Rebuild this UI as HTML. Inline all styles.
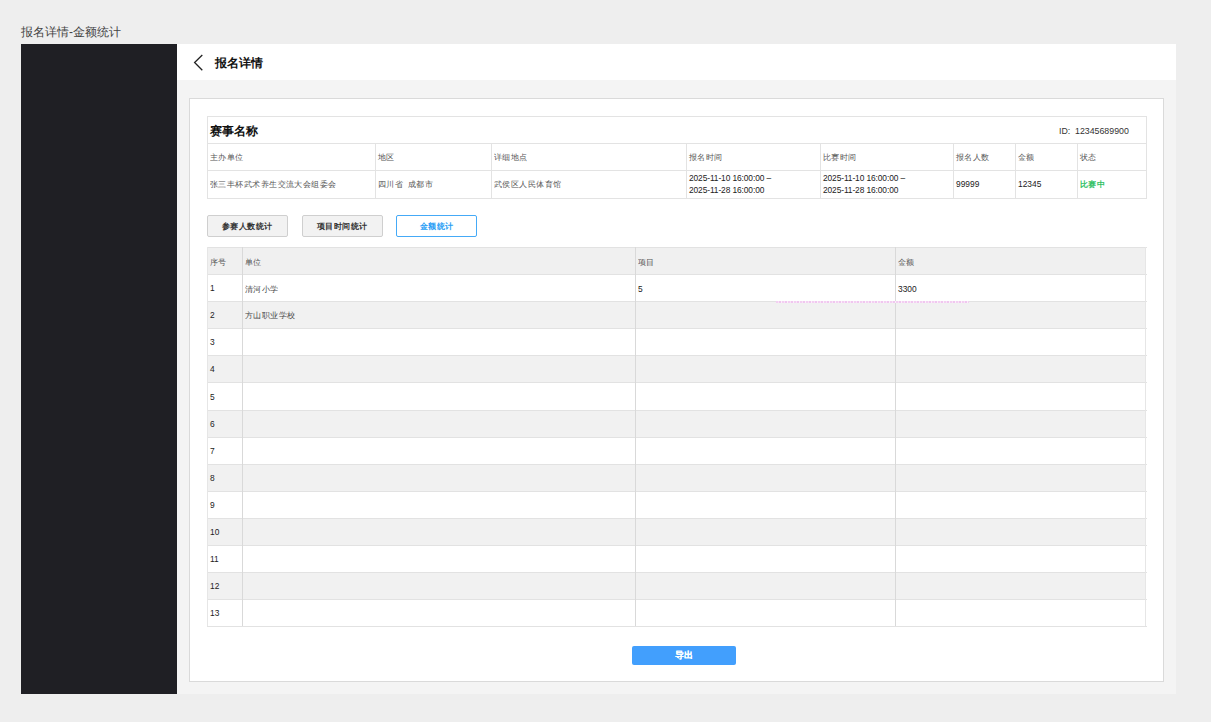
<!DOCTYPE html><html><head><meta charset="utf-8"><style>
*{margin:0;padding:0;box-sizing:border-box}
html,body{width:1211px;height:722px;overflow:hidden;background:#eeeeee;font-family:"Liberation Sans", sans-serif}
.a{position:absolute}
.t{position:absolute;white-space:nowrap;line-height:1}
.s{font-size:8px;color:#555;transform:scale(1.055);transform-origin:0 0}
.d{font-size:8.4px;color:#222}
.hl{position:absolute;height:1px}
.vl{position:absolute;width:1px}
</style></head><body>
<div class="t" style="left:21px;top:26px;font-size:12px;color:#444">报名详情-金额统计</div>
<div class="a" style="left:21px;top:44px;width:156px;height:650px;background:#1f1f24"></div>
<div class="a" style="left:177px;top:44px;width:999px;height:36px;background:#fff"></div>
<div class="a" style="left:177px;top:80px;width:999px;height:614px;background:#f4f4f4"></div>
<svg class="a" style="left:190px;top:52px" width="16" height="22" viewBox="0 0 16 22"><path d="M12.3 3 L4.6 10.5 L12.3 18.3" fill="none" stroke="#222" stroke-width="1.3"/></svg>
<div class="t" style="left:215px;top:56.5px;font-size:12px;font-weight:bold;color:#111">报名详情</div>
<div class="a" style="left:189px;top:98px;width:975px;height:584px;background:#fff;border:1px solid #dadada"></div>
<div class="a" style="left:207px;top:116px;width:940px;height:83px;border:1px solid #e3e3e3"></div>
<div class="hl" style="left:207px;top:143px;width:939px;background:#e3e3e3"></div>
<div class="hl" style="left:207px;top:170px;width:939px;background:#e3e3e3"></div>
<div class="vl" style="left:375px;top:143px;height:55px;background:#e3e3e3"></div>
<div class="vl" style="left:491px;top:143px;height:55px;background:#e3e3e3"></div>
<div class="vl" style="left:686px;top:143px;height:55px;background:#e3e3e3"></div>
<div class="vl" style="left:820px;top:143px;height:55px;background:#e3e3e3"></div>
<div class="vl" style="left:953px;top:143px;height:55px;background:#e3e3e3"></div>
<div class="vl" style="left:1015px;top:143px;height:55px;background:#e3e3e3"></div>
<div class="vl" style="left:1077px;top:143px;height:55px;background:#e3e3e3"></div>
<div class="t" style="left:210px;top:125px;font-size:12px;font-weight:bold;color:#111">赛事名称</div>
<div class="t" style="left:1059px;top:127px;font-size:8.8px;color:#333">ID:</div>
<div class="t" style="left:1075px;top:127px;font-size:8.8px;color:#333">12345689900</div>
<div class="t s" style="left:210px;top:154px;">主办单位</div>
<div class="t s" style="left:378px;top:154px;">地区</div>
<div class="t s" style="left:494px;top:154px;">详细地点</div>
<div class="t s" style="left:689px;top:154px;">报名时间</div>
<div class="t s" style="left:823px;top:154px;">比赛时间</div>
<div class="t s" style="left:956px;top:154px;">报名人数</div>
<div class="t s" style="left:1018px;top:154px;">金额</div>
<div class="t s" style="left:1080px;top:154px;">状态</div>
<div class="t s" style="left:210px;top:181px;">张三丰杯武术养生交流大会组委会</div>
<div class="t s" style="left:378px;top:181px;">四川省&nbsp;&nbsp;成都市</div>
<div class="t s" style="left:494px;top:181px;">武侯区人民体育馆</div>
<div class="t d" style="left:689px;top:172px;line-height:12px;letter-spacing:-0.1px">2025-11-10 16:00:00 –<br>2025-11-28 16:00:00</div>
<div class="t d" style="left:823px;top:172px;line-height:12px;letter-spacing:-0.1px">2025-11-10 16:00:00 –<br>2025-11-28 16:00:00</div>
<div class="t d" style="left:956px;top:180px">99999</div>
<div class="t d" style="left:1018px;top:180px">12345</div>
<div class="t s" style="left:1080px;top:181px;font-weight:bold;color:#2fbf63">比赛中</div>
<div class="a" style="left:207px;top:215px;width:81px;height:22px;border-radius:2px;background:#f2f2f2;border:1px solid #cfcfcf;color:#333"></div>
<div class="t s" style="left:222.18px;top:222.5px;font-weight:bold;color:#333">参赛人数统计</div>
<div class="a" style="left:302px;top:215px;width:81px;height:22px;border-radius:2px;background:#f2f2f2;border:1px solid #cfcfcf;color:#333"></div>
<div class="t s" style="left:317.18px;top:222.5px;font-weight:bold;color:#333">项目时间统计</div>
<div class="a" style="left:396px;top:215px;width:81px;height:22px;border-radius:2px;background:#fff;border:1px solid #45aaf7;color:#2a9ef5"></div>
<div class="t s" style="left:419.62px;top:222.5px;font-weight:bold;color:#2a9ef5">金额统计</div>
<div class="a" style="left:207px;top:247px;width:939px;height:27px;background:#f0f0f0"></div>
<div class="a" style="left:207px;top:301px;width:939px;height:27px;background:#f1f1f1"></div>
<div class="a" style="left:207px;top:355px;width:939px;height:27px;background:#f1f1f1"></div>
<div class="a" style="left:207px;top:410px;width:939px;height:27px;background:#f1f1f1"></div>
<div class="a" style="left:207px;top:464px;width:939px;height:27px;background:#f1f1f1"></div>
<div class="a" style="left:207px;top:518px;width:939px;height:27px;background:#f1f1f1"></div>
<div class="a" style="left:207px;top:572px;width:939px;height:27px;background:#f1f1f1"></div>
<div class="hl" style="left:207px;top:247px;width:940px;background:#e2e2e2"></div>
<div class="hl" style="left:207px;top:274px;width:940px;background:#e2e2e2"></div>
<div class="hl" style="left:207px;top:301px;width:940px;background:#e2e2e2"></div>
<div class="hl" style="left:207px;top:328px;width:940px;background:#e2e2e2"></div>
<div class="hl" style="left:207px;top:355px;width:940px;background:#e2e2e2"></div>
<div class="hl" style="left:207px;top:382px;width:940px;background:#e2e2e2"></div>
<div class="hl" style="left:207px;top:410px;width:940px;background:#e2e2e2"></div>
<div class="hl" style="left:207px;top:437px;width:940px;background:#e2e2e2"></div>
<div class="hl" style="left:207px;top:464px;width:940px;background:#e2e2e2"></div>
<div class="hl" style="left:207px;top:491px;width:940px;background:#e2e2e2"></div>
<div class="hl" style="left:207px;top:518px;width:940px;background:#e2e2e2"></div>
<div class="hl" style="left:207px;top:545px;width:940px;background:#e2e2e2"></div>
<div class="hl" style="left:207px;top:572px;width:940px;background:#e2e2e2"></div>
<div class="hl" style="left:207px;top:599px;width:940px;background:#e2e2e2"></div>
<div class="hl" style="left:207px;top:626px;width:940px;background:#e2e2e2"></div>
<div class="vl" style="left:207px;top:247px;height:379px;background:#e6e6e6"></div>
<div class="vl" style="left:242px;top:247px;height:379px;background:#d9d9d9"></div>
<div class="vl" style="left:635px;top:247px;height:379px;background:#d9d9d9"></div>
<div class="vl" style="left:895px;top:247px;height:379px;background:#d9d9d9"></div>
<div class="vl" style="left:1145px;top:247px;height:379px;background:#e6e6e6"></div>
<div class="t s" style="left:210px;top:258.5px;">序号</div>
<div class="t s" style="left:245px;top:258.5px;">单位</div>
<div class="t s" style="left:638px;top:258.5px;">项目</div>
<div class="t s" style="left:898px;top:258.5px;">金额</div>
<div class="t d" style="left:210px;top:284.1px">1</div>
<div class="t d" style="left:210px;top:311.1px">2</div>
<div class="t d" style="left:210px;top:338.1px">3</div>
<div class="t d" style="left:210px;top:365.1px">4</div>
<div class="t d" style="left:210px;top:392.6px">5</div>
<div class="t d" style="left:210px;top:420.1px">6</div>
<div class="t d" style="left:210px;top:447.1px">7</div>
<div class="t d" style="left:210px;top:474.1px">8</div>
<div class="t d" style="left:210px;top:501.1px">9</div>
<div class="t d" style="left:210px;top:528.1px">10</div>
<div class="t d" style="left:210px;top:555.1px">11</div>
<div class="t d" style="left:210px;top:582.1px">12</div>
<div class="t d" style="left:210px;top:609.1px">13</div>
<div class="t s" style="left:245px;top:286px;color:#444">清河小学</div>
<div class="t d" style="left:638px;top:284.5px">5</div>
<div class="t d" style="left:898px;top:284.5px">3300</div>
<div class="t s" style="left:245px;top:312px;color:#444">方山职业学校</div>
<div class="a" style="left:776px;top:301px;width:193px;height:2px;background:repeating-linear-gradient(90deg,#f3cff2 0 2px,#f8e4f7 2px 3px,#f0c6ef 3px 5px,#fbf0fa 5px 6px)"></div>
<div class="a" style="left:632px;top:646px;width:104px;height:19px;border-radius:2px;background:#429ffd"></div>
<div class="t" style="left:675px;top:651px;font-size:9px;font-weight:bold;color:#fff;text-shadow:0.4px 0 0 #fff">导出</div>
</body></html>
